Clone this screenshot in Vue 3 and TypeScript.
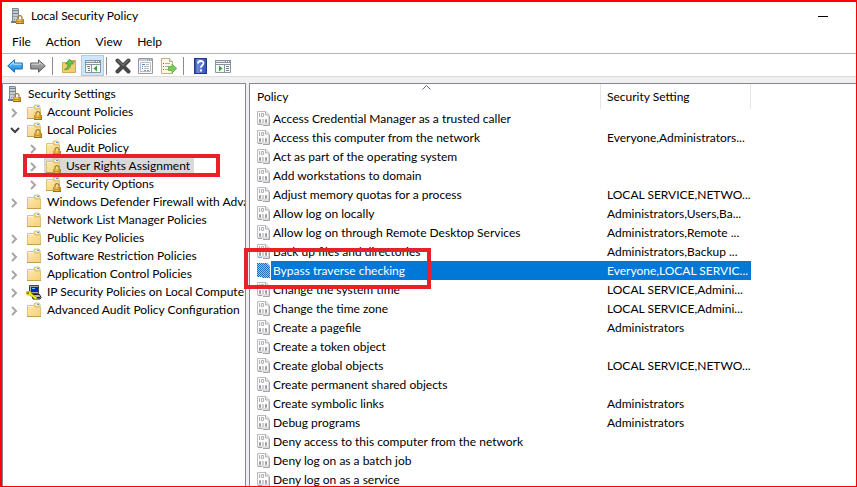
<script setup lang="ts">
import { computed, ref } from 'vue'

interface TreeNode {
  label: string
  icon: string
  level: number
  state?: 'open' | 'closed'
}

interface Policy {
  name: string
  setting: string
}

const menus = ['File', 'Action', 'View', 'Help']

const toolGroups = [
  [
    { id: 'back', label: 'Back' },
    { id: 'forward', label: 'Forward' },
  ],
  [
    { id: 'up', label: 'Up one level' },
    { id: 'tree', label: 'Show or hide console tree', active: true },
  ],
  [
    { id: 'delete', label: 'Delete' },
    { id: 'props', label: 'Properties' },
    { id: 'export', label: 'Export list' },
  ],
  [
    { id: 'help', label: 'Help' },
    { id: 'actions', label: 'Show or hide action pane' },
  ],
]

const nodes: TreeNode[] = [
  { label: 'Security Settings', icon: 'server', level: 0 },
  { label: 'Account Policies', icon: 'folder-lock', level: 1, state: 'closed' },
  { label: 'Local Policies', icon: 'folder-lock', level: 1, state: 'open' },
  { label: 'Audit Policy', icon: 'folder-lock', level: 2, state: 'closed' },
  { label: 'User Rights Assignment', icon: 'folder-lock', level: 2, state: 'closed' },
  { label: 'Security Options', icon: 'folder-lock', level: 2, state: 'closed' },
  { label: 'Windows Defender Firewall with Adva', icon: 'folder', level: 1, state: 'closed' },
  { label: 'Network List Manager Policies', icon: 'folder', level: 1 },
  { label: 'Public Key Policies', icon: 'folder', level: 1, state: 'closed' },
  { label: 'Software Restriction Policies', icon: 'folder', level: 1, state: 'closed' },
  { label: 'Application Control Policies', icon: 'folder', level: 1, state: 'closed' },
  { label: 'IP Security Policies on Local Compute', icon: 'ipsec', level: 1, state: 'closed' },
  { label: 'Advanced Audit Policy Configuration', icon: 'folder', level: 1, state: 'closed' },
]

const policies: Policy[] = [
  { name: 'Access Credential Manager as a trusted caller', setting: '' },
  { name: 'Access this computer from the network', setting: 'Everyone,Administrators...' },
  { name: 'Act as part of the operating system', setting: '' },
  { name: 'Add workstations to domain', setting: '' },
  { name: 'Adjust memory quotas for a process', setting: 'LOCAL SERVICE,NETWO...' },
  { name: 'Allow log on locally', setting: 'Administrators,Users,Ba...' },
  { name: 'Allow log on through Remote Desktop Services', setting: 'Administrators,Remote ...' },
  { name: 'Back up files and directories', setting: 'Administrators,Backup ...' },
  { name: 'Bypass traverse checking', setting: 'Everyone,LOCAL SERVIC...' },
  { name: 'Change the system time', setting: 'LOCAL SERVICE,Admini...' },
  { name: 'Change the time zone', setting: 'LOCAL SERVICE,Admini...' },
  { name: 'Create a pagefile', setting: 'Administrators' },
  { name: 'Create a token object', setting: '' },
  { name: 'Create global objects', setting: 'LOCAL SERVICE,NETWO...' },
  { name: 'Create permanent shared objects', setting: '' },
  { name: 'Create symbolic links', setting: 'Administrators' },
  { name: 'Debug programs', setting: 'Administrators' },
  { name: 'Deny access to this computer from the network', setting: '' },
  { name: 'Deny log on as a batch job', setting: '' },
  { name: 'Deny log on as a service', setting: '' },
]

const selectedNode = ref('User Rights Assignment')
const selectedPolicy = ref('Bypass traverse checking')
const localOpen = ref(true)

const visibleNodes = computed(() => nodes.filter((n) => n.level < 2 || localOpen.value))

function isOpen(node: TreeNode): boolean {
  return node.state === 'open' && localOpen.value
}

function toggle(node: TreeNode): void {
  if (node.state === 'open') localOpen.value = !localOpen.value
}
</script>

<template>
  <div class="window">
    <svg class="sprite" width="0" height="0" aria-hidden="true">
      <defs>
        <linearGradient id="g-folder" x1="0" y1="0" x2="1" y2="1">
          <stop offset="0" stop-color="#ffe9a8" />
          <stop offset="1" stop-color="#f3d07c" />
        </linearGradient>
        <linearGradient id="g-lock" x1="0" y1="0" x2="1" y2="0">
          <stop offset="0" stop-color="#c08f22" />
          <stop offset="0.45" stop-color="#edc65a" />
          <stop offset="1" stop-color="#b07d15" />
        </linearGradient>
        <linearGradient id="g-blue" x1="0" y1="0" x2="0" y2="1">
          <stop offset="0" stop-color="#8fd6fb" />
          <stop offset="0.5" stop-color="#3fa9ee" />
          <stop offset="1" stop-color="#1f80cf" />
        </linearGradient>
        <linearGradient id="g-gray" x1="0" y1="0" x2="0" y2="1">
          <stop offset="0" stop-color="#b5b5b5" />
          <stop offset="1" stop-color="#808080" />
        </linearGradient>
        <linearGradient id="g-help" x1="0" y1="0" x2="1" y2="0">
          <stop offset="0" stop-color="#2b449c" />
          <stop offset="0.2" stop-color="#6d8be0" />
          <stop offset="1" stop-color="#3553bd" />
        </linearGradient>
        <pattern id="p-dither" width="2" height="2" patternUnits="userSpaceOnUse">
          <rect width="2" height="2" fill="#b4b8bc" />
          <rect width="1" height="1" fill="#1c6fb8" />
          <rect x="1" y="1" width="1" height="1" fill="#1c6fb8" />
        </pattern>

        <symbol id="lock" viewBox="0 0 8 9">
          <path d="M2 4.500V2.600a2 2 0 0 1 4 0v1.900" fill="none" stroke="#a17a2a" stroke-width="1.200" />
          <rect x="0" y="4" width="8" height="5" fill="url(#g-lock)" />
          <path d="M0 8.500h8" stroke="#9a6d12" />
          <path d="M1 6.500h6" stroke="#c4942a" />
        </symbol>
        <symbol id="server" viewBox="0 0 16 16">
          <path d="M2 0h6l1 1v13H2z" fill="#7d8a96" />
          <path d="M3 1h5v12H3z" fill="#c3ccd3" />
          <path d="M3 2.500h5M3 5.500h5" stroke="#75828e" />
          <path d="M3 8.500h5" stroke="#94a0aa" />
          <path d="M1 13h8v2H1z" fill="#6f7c88" />
          <path d="M4 11h1v1H4z" fill="#5bbf4c" />
          <use href="#lock" x="6" y="7" width="8" height="9" />
        </symbol>
        <symbol id="folder" viewBox="0 0 16 16">
          <path d="M8 4V1.500L9 1h4l1 1v3z" fill="#f7dc96" stroke="#d9bb70" stroke-width="0.800" />
          <path d="M10 2h3v1.500h-3z" fill="#ffffff" />
          <path d="M11 2h2v1h-2z" fill="#4f9fdc" />
          <path d="M1.500 3.500h6l1.500 1.500h5.500v9.500h-13z" fill="url(#g-folder)" stroke="#dfc078" />
          <path d="M2 4.500h5.500" stroke="#fff7da" />
          <path d="M1 14.500h14" stroke="#c39f50" />
        </symbol>
        <symbol id="folder-lock" viewBox="0 0 16 16">
          <use href="#folder" width="16" height="16" />
          <use href="#lock" x="8" y="7" width="8" height="9" />
        </symbol>
        <symbol id="ipsec" viewBox="0 0 16 16">
          <path d="M3.500 1.500h9v8h-9z" fill="#a9a9a9" stroke="#444" />
          <path d="M5 3h7v5H5z" fill="#0a1fd0" />
          <path d="M6 4h3v1H6z" fill="#4ed3ff" />
          <path d="M5.500 10.500h8l1.500 3-1 1.500H7z" fill="#b9b9b9" stroke="#222" />
          <path d="M11 13.500h3" stroke="#222" />
          <path d="M0 8l4-1 1 2 6 5-1.500 1.500L4 11H1z" fill="#fff200" stroke="#8d8400" stroke-width="0.500" />
          <path d="M1 9h2" stroke="#222" />
        </symbol>
        <symbol id="binary" viewBox="0 0 13 15">
          <path d="M.500.500h8.500l3 3v9.500H.500z" fill="#fcfcfc" stroke="#bcbcbc" />
          <path d="M8.500.500v3.500h3.500" fill="#e8e8e8" stroke="#b0b0b0" />
          <path d="M1 13.500h4M6 14.500h6.500V5" fill="none" stroke="#a4a4a4" />
          <path d="M2.500 2v4M4.500 2.500h2v3h-2z" fill="none" stroke="#b0b0b8" />
          <path d="M2.500 8.500h1v3h-1zM6 8v4M8.500 8.500h1v3h-1z" fill="none" stroke="#9c9ca6" />
        </symbol>
        <symbol id="binary-selected" viewBox="0 0 13 15">
          <path d="M0 0h10l3 3v12H5v-1H0z" fill="url(#p-dither)" />
        </symbol>
        <symbol id="back" viewBox="0 0 16 16">
          <path d="M.700 8 7.500 1.800V5h7.800v6H7.500v3.200z" fill="url(#g-blue)" stroke="#1b6cb3" stroke-linejoin="round" />
          <path d="M3 7.500 6.500 4.300V6.200h8" fill="none" stroke="#b8e6ff" />
        </symbol>
        <symbol id="forward" viewBox="0 0 16 16">
          <path d="M15.300 8 8.500 1.800V5H.700v6h7.800v3.200z" fill="url(#g-gray)" stroke="#606060" stroke-linejoin="round" />
          <path d="M1.500 6.200h8V4.300L12.500 7" fill="none" stroke="#d4d4d4" />
        </symbol>
        <symbol id="up" viewBox="0 0 16 16">
          <path d="M1.500 4.500h6l1.500-2h5.500v12h-13z" fill="#f4d27a" stroke="#cfaa57" />
          <path d="M2 7.500h12v6.500H2z" fill="#f2cd70" />
          <path d="M11 3h3v1.500h-3z" fill="#5aa5dc" />
          <path d="M3.500 11.500C6 10.500 7 8.500 7 6H4.500L8.500 1l4 5H9.800c0 4-2.800 6-6.300 5.500z" fill="#62c443" stroke="#35882a" stroke-width="0.600" />
        </symbol>
        <symbol id="tree" viewBox="0 0 16 16">
          <path d="M.500 2.500h15v12H.500z" fill="#f7f9fb" stroke="#8c949c" />
          <path d="M0 2h16v3H0z" fill="#8a939d" />
          <path d="M1 3.500h9" stroke="#dfe4e8" />
          <path d="M11 3.500h1M13 3.500h1" stroke="#fff" />
          <path d="M1 6.500h14M6.500 7v7" stroke="#8c949c" />
          <path d="M2 8.500h3M3 10.500h2M3 12.500h2" stroke="#70808f" />
          <path d="M12 7.500v6L8.500 10.500z" fill="#36a32c" />
        </symbol>
        <symbol id="actions" viewBox="0 0 16 16">
          <path d="M.500 2.500h15v12H.500z" fill="#f7f9fb" stroke="#8c949c" />
          <path d="M0 2h16v3H0z" fill="#8a939d" />
          <path d="M1 3.500h9" stroke="#dfe4e8" />
          <path d="M11 3.500h1M13 3.500h1" stroke="#fff" />
          <path d="M1 6.500h14M9.500 7v7" stroke="#8c949c" />
          <path d="M11 8.500h3M11 10.500h3M11 12.500h3" stroke="#70808f" />
          <path d="M4 7.500v6l3.500-3z" fill="#36a32c" />
        </symbol>
        <symbol id="delete" viewBox="0 0 16 16">
          <path d="M2.500 2.500 13.500 13.500M13.500 2.500 2.500 13.500" stroke="#484848" stroke-width="4" stroke-linecap="round" />
          <path d="M2.500 2 8 7.500 13.500 2" fill="none" stroke="#8a8a8a" />
        </symbol>
        <symbol id="props" viewBox="0 0 16 16">
          <path d="M.500.500h14v15H.500z" fill="#fafafa" stroke="#969ba0" />
          <path d="M1 2h13" stroke="#c6ccd2" stroke-width="2" />
          <path d="M9 2h1M11 2h1M13 2h1" stroke="#6f7a85" />
          <path d="M2.500 4.500h10v9h-10z" fill="#fff" stroke="#b4bec8" />
          <path d="M4 6.500h3M4 8.500h1M4 10.500h1" stroke="#3a91cf" />
          <path d="M6 8.500h5M6 10.500h5M8 6.500h3" stroke="#b4b9bf" />
          <path d="M6 12.500h2M9 12.500h2" stroke="#8b959f" />
        </symbol>
        <symbol id="export" viewBox="0 0 16 16">
          <path d="M.500.500h8l3 3v12h-11z" fill="#fff9dc" stroke="#b5b19c" />
          <path d="M8.500.500v3h3" fill="#e9e2bb" stroke="#b5b19c" />
          <path d="M2 5.500h1M2 8.500h1M2 11.500h1" stroke="#5d6470" />
          <path d="M4 5.500h5M4 8.500h4M4 11.500h4" stroke="#a9adbb" />
          <path d="M7.500 8.500H11V6l4.700 4.500L11 15v-2.500H7.500z" fill="#7acb58" stroke="#4ea43c" stroke-width="0.700" />
        </symbol>
        <symbol id="help" viewBox="0 0 16 16">
          <path d="M2 0h13v16H2z" fill="#22377f" />
          <path d="M3 1h11v14H3z" fill="url(#g-help)" />
          <path d="M6 5.500c0-3.300 5.500-3.300 5.500-.300 0 2-2.600 2.200-2.600 4.500" fill="none" stroke="#fff" stroke-width="1.800" />
          <path d="M8 11.500h2v2H8z" fill="#fff" />
        </symbol>
      </defs>
    </svg>

    <header class="titlebar">
      <svg class="icon"><use href="#server" /></svg>
      <h1>Local Security Policy</h1>
      <button class="minimize" type="button" aria-label="Minimize"><span></span></button>
    </header>

    <nav class="menubar">
      <button v-for="menu in menus" :key="menu" type="button">{{ menu }}</button>
    </nav>

    <div class="toolbar" role="toolbar">
      <div v-for="(group, i) in toolGroups" :key="i" class="group">
        <button
          v-for="tool in group"
          :key="tool.id"
          type="button"
          :class="{ active: 'active' in tool }"
          :aria-label="tool.label"
        >
          <svg class="icon"><use :href="'#' + tool.id" /></svg>
        </button>
      </div>
    </div>

    <main class="workspace">
      <ul class="pane tree" role="tree">
        <li v-for="node in visibleNodes" :key="node.label" :class="['node', 'level-' + node.level]" role="treeitem">
          <button
            v-if="node.state"
            class="toggle"
            type="button"
            :class="{ open: isOpen(node) }"
            :aria-label="(isOpen(node) ? 'Collapse ' : 'Expand ') + node.label"
            @click="toggle(node)"
          >
            <svg viewBox="0 0 10 10"><path d="M2 1 6 5 2 9" /></svg>
          </button>
          <span v-else-if="node.level" class="toggle"></span>
          <button
            class="item"
            type="button"
            :class="{ selected: node.label === selectedNode }"
            @click="selectedNode = node.label"
          >
            <svg class="icon"><use :href="'#' + node.icon" /></svg>
            <span>{{ node.label }}</span>
          </button>
        </li>
      </ul>

      <section class="pane list">
        <table>
          <colgroup>
            <col class="col-policy" />
            <col class="col-setting" />
          </colgroup>
          <thead>
            <tr>
              <th scope="col" aria-sort="ascending">
                Policy
                <svg class="sort" viewBox="0 0 9 5"><path d="M.500 4.500l4-4 4 4" /></svg>
              </th>
              <th scope="col">Security Setting</th>
            </tr>
          </thead>
          <tbody>
            <tr
              v-for="policy in policies"
              :key="policy.name"
              :class="{ selected: policy.name === selectedPolicy }"
              @click="selectedPolicy = policy.name"
            >
              <td>
                <div class="cell">
                  <svg class="page">
                    <use :href="policy.name === selectedPolicy ? '#binary-selected' : '#binary'" />
                  </svg>
                  <span class="name">{{ policy.name }}</span>
                </div>
              </td>
              <td class="setting">{{ policy.setting }}</td>
            </tr>
          </tbody>
        </table>
      </section>
    </main>

    <div class="callout callout-tree"></div>
    <div class="callout callout-list"></div>
  </div>
</template>

<style>
body {
  overflow: hidden;
}
</style>

<style scoped>
* {
  box-sizing: border-box;
}

.window {
  position: relative;
  display: flex;
  flex-direction: column;
  height: 100vh;
  border: solid #ff0000;
  border-width: 2px 1px 1px 2px;
  background: #ffffff;
  color: #000000;
  font-family: Lato, "Liberation Sans", sans-serif;
  font-size: 12px;
  line-height: 18px;
}

.sprite {
  position: absolute;
}

button {
  margin: 0;
  padding: 0;
  border: 0;
  background: none;
  color: inherit;
  font: inherit;
}

.icon {
  flex: none;
  display: block;
  width: 16px;
  height: 16px;
}

.titlebar {
  display: flex;
  align-items: center;
  flex: none;
  height: 28px;
  padding: 0 10px 0 8px;
}

.titlebar h1 {
  flex: 1;
  margin: 0;
  padding-left: 5px;
  font-size: 12px;
  font-weight: 400;
}

.minimize {
  display: flex;
  align-items: center;
  justify-content: center;
  width: 46px;
  height: 26px;
}

.minimize span {
  width: 10px;
  height: 1px;
  background: #000000;
}

.menubar {
  display: flex;
  flex: none;
  height: 24px;
  padding-left: 3px;
  border-bottom: 1px solid #b4b4bb;
}

.menubar button {
  padding: 0 8px 0 7px;
}

.toolbar {
  display: flex;
  flex: none;
  height: 23px;
  padding: 1px 0 0 2px;
  border-bottom: 1px solid #dcdcdc;
}

.group {
  display: flex;
}

.group + .group::before {
  content: "";
  width: 1px;
  height: 18px;
  margin: 2px 5px 0 2px;
  background: #8c8c8c;
}

.toolbar button {
  width: 23px;
  height: 21px;
  padding: 0 3px;
}

.toolbar button.active {
  padding: 0 3px;
  border: 1px solid #99d1ff;
  background: #cce8ff;
}

.workspace {
  display: flex;
  flex: 1;
  gap: 3px;
  min-height: 0;
  padding-top: 6px;
  background: #f0f0f0;
}

.pane {
  overflow: hidden;
  border: solid #828790;
  background: #ffffff;
}

.tree {
  flex: 0 0 244px;
  margin: 0;
  padding: 1px 0 0;
  border-width: 1px 1px 0;
  list-style: none;
}

.node {
  display: flex;
  align-items: center;
  height: 18px;
  white-space: nowrap;
}

.level-0 {
  padding-left: 3px;
}

.level-1 {
  padding-left: 4px;
}

.level-2 {
  padding-left: 23px;
}

.toggle {
  display: flex;
  flex: none;
  align-items: center;
  width: 18px;
  height: 18px;
  padding: 2px 0 0 3px;
}

.toggle svg {
  width: 10px;
  height: 10px;
  fill: none;
  stroke: #a6a6a6;
  stroke-width: 2;
}

.toggle.open svg {
  stroke: #404040;
  transform: rotate(90deg);
}

.item {
  display: flex;
  flex: none;
  align-items: center;
  gap: 5px;
  height: 18px;
  padding: 0 4px 0 1px;
}

.item.selected {
  background: #d9d9d9;
}

.list {
  flex: 1;
  min-width: 0;
  border-width: 1px 0 0 1px;
}

table {
  width: 501px;
  border-collapse: separate;
  border-spacing: 0;
  table-layout: fixed;
}

.col-policy {
  width: 351px;
}

.col-setting {
  width: 150px;
}

th {
  position: relative;
  height: 25px;
  padding: 0 0 0 7px;
  border-right: 1px solid #e5e5e5;
  font-weight: 400;
  text-align: left;
}

th + th {
  padding-left: 6px;
}

.sort {
  position: absolute;
  top: 1px;
  left: 50%;
  width: 9px;
  height: 5px;
  margin-left: -3px;
  fill: none;
  stroke: #6a6a6a;
}

td {
  height: 19px;
  padding: 0;
  white-space: nowrap;
}

.cell {
  display: flex;
  align-items: center;
  height: 19px;
  padding-left: 7px;
}

.page {
  flex: none;
  width: 13px;
  height: 15px;
}

.name {
  flex: 1;
  margin-left: 1px;
  padding-left: 2px;
  line-height: 19px;
}

.setting {
  padding-left: 6px;
}

.selected .name,
.selected .setting {
  background: #0078d7;
  color: #ffffff;
}

.callout {
  position: absolute;
  border: 4px solid #e8202a;
  pointer-events: none;
}

.callout-tree {
  top: 152px;
  left: 21px;
  width: 197px;
  height: 23px;
}

.callout-list {
  top: 246px;
  left: 242px;
  width: 187px;
  height: 41px;
}
</style>
